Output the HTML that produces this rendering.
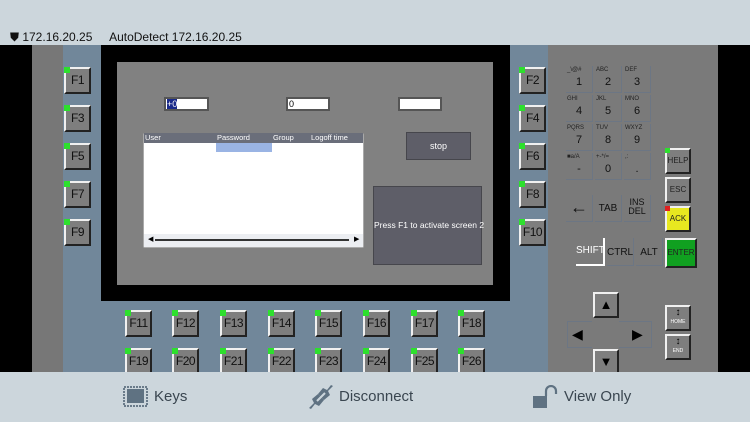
<!DOCTYPE html>
<html><head><meta charset="utf-8"><style>
*{margin:0;padding:0;box-sizing:border-box}
body{width:750px;height:422px;overflow:hidden;position:relative;background:#000;font-family:"Liberation Sans",sans-serif}
.a{position:absolute}
.fk{position:absolute;width:27px;height:27px;background:#7e7e7e;border-top:2px solid #f0f0f0;border-left:2px solid #f0f0f0;border-right:2px solid #222;border-bottom:2px solid #222;font-size:12px;color:#111;text-align:center;line-height:23px;letter-spacing:-0.5px}
.fk::before{content:"";position:absolute;left:-2px;top:-2px;width:6px;height:6px;background:#2de02d}
.kp{position:absolute;width:27px;height:27px;border-right:1px solid #6c7684;border-bottom:1px solid #6c7684;color:#111;text-align:center}
.kp .s{position:absolute;left:1px;top:1px;font-size:6px;color:#222}
.kp .m{position:absolute;left:0;right:0;top:10px;font-size:11px}
.bk{position:absolute;background:#7e7e7e;border-top:2px solid #f0f0f0;border-left:2px solid #f0f0f0;border-right:2px solid #222;border-bottom:2px solid #222;font-size:8px;text-align:center;color:#222}
</style></head><body>
<div class="a" style="left:0;top:0;width:750px;height:45px;background:#ccd6dc"></div>
<div class="a" style="left:10px;top:30px;font-size:12px;color:#111">&#x26CA;&nbsp;172.16.20.25 &nbsp;&nbsp;&nbsp;&nbsp;AutoDetect 172.16.20.25</div>
<div class="a" style="left:32px;top:45px;width:31px;height:327px;background:#777"></div>
<div class="a" style="left:63px;top:45px;width:485px;height:327px;background:#71879a"></div>
<div class="a" style="left:101px;top:45px;width:409px;height:256px;background:#000"></div>
<div class="a" style="left:117px;top:62px;width:376px;height:223px;background:#818181"></div>
<div class="a" style="left:548px;top:45px;width:170px;height:327px;background:#7a7a7a"></div>

<div class="a" style="left:164px;top:97px;width:45px;height:14px;background:#fff;border:2px solid #555;font-size:9px;padding-left:1px"><span style="background:#1a2a8a;color:#fff">+0</span></div>
<div class="a" style="left:286px;top:97px;width:44px;height:14px;background:#fff;border:2px solid #555;font-size:9px;padding-left:1px">0</div>
<div class="a" style="left:398px;top:97px;width:44px;height:14px;background:#fff;border:2px solid #555"></div>
<div class="a" style="left:143px;top:133px;width:221px;height:115px;background:#fff;border:1px solid #aaa;border-radius:2px"></div>
<div class="a" style="left:144px;top:133px;width:219px;height:10px;background:#6a6e7a;color:#fff;font-size:7.5px;line-height:10px">
<span class="a" style="left:1px">User</span><span class="a" style="left:73px">Password</span><span class="a" style="left:129px">Group</span><span class="a" style="left:167px">Logoff time</span></div>
<div class="a" style="left:216px;top:143px;width:56px;height:9px;background:#9ab4e4"></div>
<div class="a" style="left:144px;top:234px;width:219px;height:13px;background:#eceef2"></div>
<div class="a" style="left:155px;top:239px;width:194px;height:2px;background:#333"></div>
<div class="a" style="left:148px;top:235px;font-size:7px">&#9664;</div>
<div class="a" style="left:354px;top:235px;font-size:7px">&#9654;</div>
<div class="a" style="left:406px;top:132px;width:65px;height:28px;background:#5e5e68;border:1px solid #46464c;color:#fff;font-size:9px;text-align:center;line-height:26px">stop</div>
<div class="a" style="left:373px;top:186px;width:109px;height:79px;background:#5e5e68;border:1px solid #46464c;color:#fff;font-size:8.5px;text-align:center;line-height:77px;white-space:nowrap">Press F1 to activate screen 2</div>

<div class="fk" style="left:64px;top:67px">F1</div>
<div class="fk" style="left:64px;top:105px">F3</div>
<div class="fk" style="left:64px;top:143px">F5</div>
<div class="fk" style="left:64px;top:181px">F7</div>
<div class="fk" style="left:64px;top:219px">F9</div>
<div class="fk" style="left:519px;top:67px">F2</div>
<div class="fk" style="left:519px;top:105px">F4</div>
<div class="fk" style="left:519px;top:143px">F6</div>
<div class="fk" style="left:519px;top:181px">F8</div>
<div class="fk" style="left:519px;top:219px">F10</div>
<div class="fk" style="left:125px;top:310px">F11</div>
<div class="fk" style="left:172px;top:310px">F12</div>
<div class="fk" style="left:220px;top:310px">F13</div>
<div class="fk" style="left:268px;top:310px">F14</div>
<div class="fk" style="left:315px;top:310px">F15</div>
<div class="fk" style="left:363px;top:310px">F16</div>
<div class="fk" style="left:411px;top:310px">F17</div>
<div class="fk" style="left:458px;top:310px">F18</div>
<div class="fk" style="left:125px;top:348px">F19</div>
<div class="fk" style="left:172px;top:348px">F20</div>
<div class="fk" style="left:220px;top:348px">F21</div>
<div class="fk" style="left:268px;top:348px">F22</div>
<div class="fk" style="left:315px;top:348px">F23</div>
<div class="fk" style="left:363px;top:348px">F24</div>
<div class="fk" style="left:411px;top:348px">F25</div>
<div class="fk" style="left:458px;top:348px">F26</div>

<div class="kp" style="left:566px;top:66px"><span class="s">_\@#</span><span class="m">1</span></div>
<div class="kp" style="left:595px;top:66px"><span class="s">ABC</span><span class="m">2</span></div>
<div class="kp" style="left:624px;top:66px"><span class="s">DEF</span><span class="m">3</span></div>
<div class="kp" style="left:566px;top:95px"><span class="s">GHI</span><span class="m">4</span></div>
<div class="kp" style="left:595px;top:95px"><span class="s">JKL</span><span class="m">5</span></div>
<div class="kp" style="left:624px;top:95px"><span class="s">MNO</span><span class="m">6</span></div>
<div class="kp" style="left:566px;top:124px"><span class="s">PQRS</span><span class="m">7</span></div>
<div class="kp" style="left:595px;top:124px"><span class="s">TUV</span><span class="m">8</span></div>
<div class="kp" style="left:624px;top:124px"><span class="s">WXYZ</span><span class="m">9</span></div>
<div class="kp" style="left:566px;top:153px"><span class="s">&#9632;a/A</span><span class="m">-</span></div>
<div class="kp" style="left:595px;top:153px"><span class="s">+-*/=</span><span class="m">0</span></div>
<div class="kp" style="left:624px;top:153px"><span class="s">,:</span><span class="m">.</span></div>
<div class="kp" style="left:566px;top:195px"><span class="m" style="top:2px;font-size:18px;font-weight:bold">&#x2190;</span></div>
<div class="kp" style="left:595px;top:195px"><span class="m" style="top:8px;font-size:10px">TAB</span></div>
<div class="kp" style="left:624px;top:195px"><span class="m" style="top:3px;font-size:9px;line-height:9px">INS<br>DEL</span></div>
<div class="a" style="left:576px;top:238px;width:29px;height:28px;border-right:2px solid #fff;border-bottom:2px solid #fff;color:#fff;font-size:10px;text-align:center;line-height:26px">SHIFT</div>
<div class="kp" style="left:607px;top:238px;height:28px"><span class="m" style="top:9px;font-size:10px">CTRL</span></div>
<div class="kp" style="left:636px;top:238px;height:28px"><span class="m" style="top:9px;font-size:10px">ALT</span></div>
<div class="bk" style="left:665px;top:148px;width:26px;height:26px;line-height:22px">HELP<span class="a" style="left:-2px;top:-2px;width:5px;height:5px;background:#2de02d"></span></div>
<div class="bk" style="left:665px;top:177px;width:26px;height:26px;line-height:22px">ESC</div>
<div class="bk" style="left:665px;top:206px;width:26px;height:26px;line-height:22px;background:#e8e820">ACK<span class="a" style="left:-2px;top:-2px;width:5px;height:5px;background:#e02020"></span></div>
<div class="bk" style="left:665px;top:238px;width:32px;height:30px;line-height:26px;background:#10a020">ENTER</div>

<div class="a" style="left:567px;top:321px;width:85px;height:27px;border:1px solid #6c7684"></div>
<div class="a" style="left:592px;top:318px;width:27px;height:32px;background:#7a7a7a"></div>
<div class="bk" style="left:593px;top:292px;width:26px;height:26px;font-size:13px;line-height:21px;color:#000">&#9650;</div>
<div class="bk" style="left:593px;top:349px;width:26px;height:26px;font-size:13px;line-height:21px;color:#000">&#9660;</div>
<div class="a" style="left:572px;top:326px;font-size:14px">&#9664;</div>
<div class="a" style="left:632px;top:326px;font-size:14px">&#9654;</div>
<div class="bk" style="left:665px;top:305px;width:26px;height:26px;font-size:5px;color:#fff;line-height:8px"><span style="color:#000;font-size:10px;line-height:11px;display:block">&#x2195;</span>HOME</div>
<div class="bk" style="left:665px;top:334px;width:26px;height:26px;font-size:5px;color:#fff;line-height:8px"><span style="color:#000;font-size:10px;line-height:11px;display:block">&#x2195;</span>END</div>

<div class="a" style="left:0;top:372px;width:750px;height:50px;background:#ccd6dc"></div>
<svg class="a" style="left:123px;top:386px" width="25" height="21"><rect x="1" y="1" width="23" height="19" fill="none" stroke="#6a7b8a" stroke-width="2" stroke-dasharray="2 1"/><rect x="4" y="3" width="17" height="14" fill="#5f7282"/></svg>
<div class="a" style="left:154px;top:388px;font-size:15px;color:#3a4650">Keys</div>
<svg class="a" style="left:308px;top:384px" width="26" height="26" viewBox="0 0 26 26"><g fill="#5f7282"><path d="M1 24 L6 19 L4 15 L10 10 L16 16 L11 22 L7 20 L3 25 Z"/><path d="M25 2 L20 7 L22 11 L16 16 L10 10 L15 4 L19 6 L23 1 Z"/></g><path d="M9 17 L17 9" stroke="#ccd6dc" stroke-width="2"/></svg>
<div class="a" style="left:339px;top:388px;font-size:15px;color:#3a4650">Disconnect</div>
<svg class="a" style="left:532px;top:385px" width="26" height="24"><rect x="1" y="11" width="14" height="12" fill="#5f7282"/><path d="M14 11 V6 a5 5 0 0 1 10 0 V9" fill="none" stroke="#5f7282" stroke-width="2.2"/></svg>
<div class="a" style="left:564px;top:388px;font-size:15px;color:#3a4650">View Only</div>
</body></html>
